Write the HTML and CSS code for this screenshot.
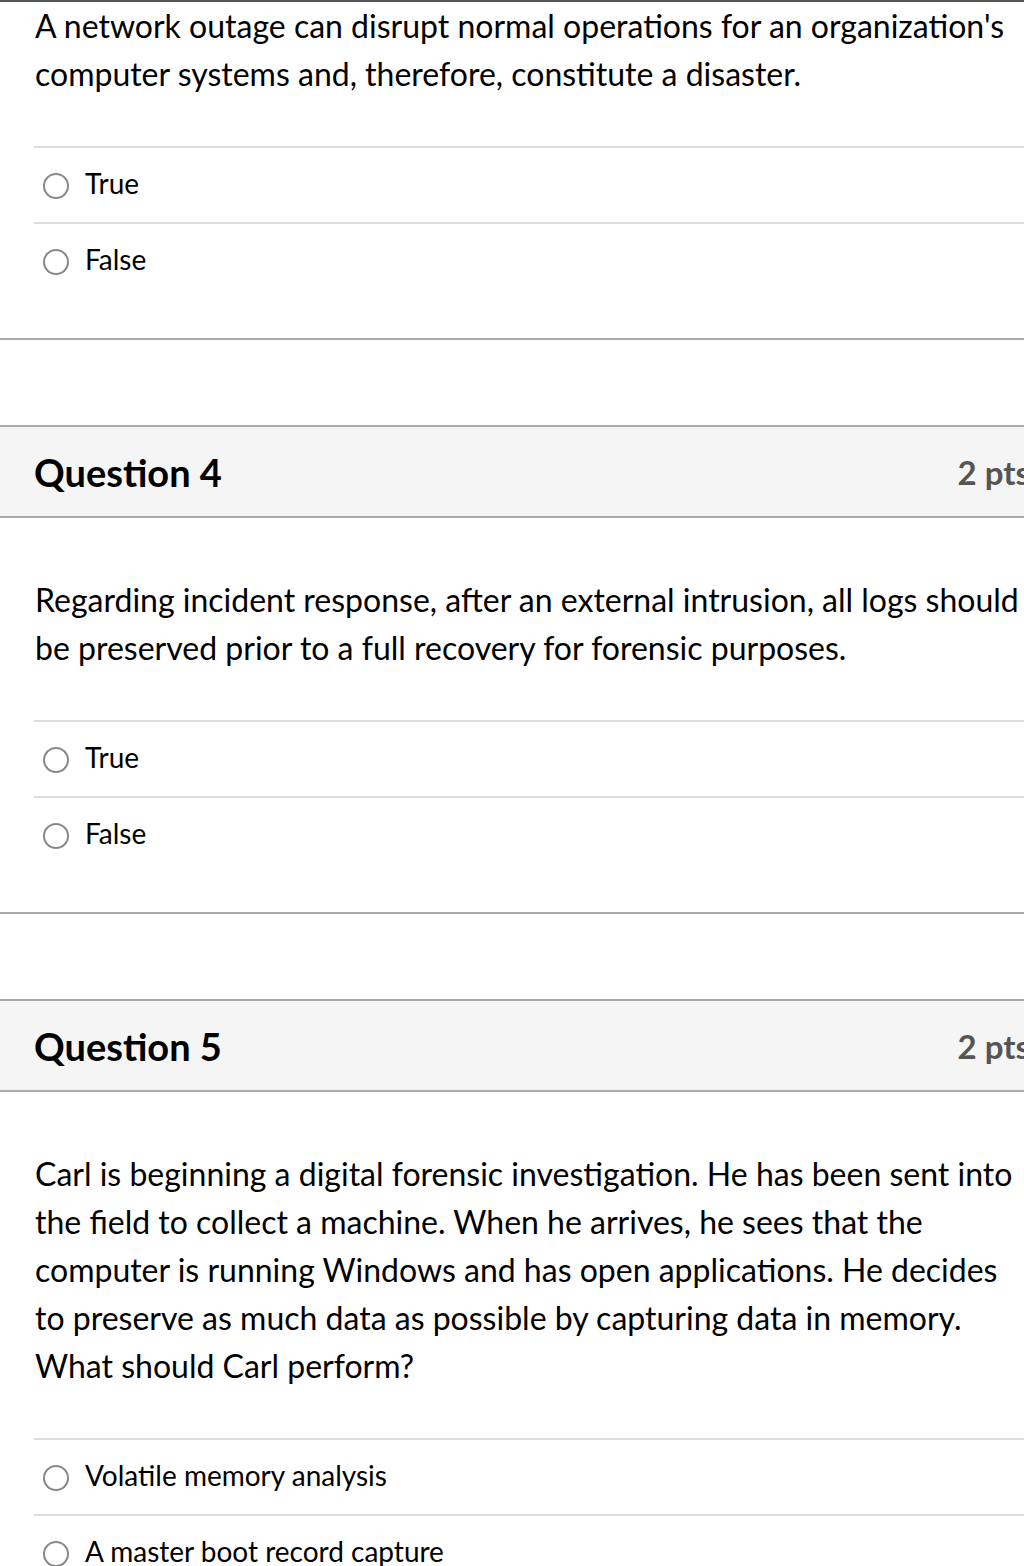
FILE: index.html
```html
<!DOCTYPE html>
<html>
<head>
<meta charset="utf-8">
<link rel="stylesheet" href="styles.css">
</head>
<body>
<div class="page">
  <div class="question first">
    <div class="qtext">A network outage can disrupt normal operations for an organization's computer systems and, therefore, constitute a disaster.</div>
    <div class="answers">
      <div class="answer"><span class="radio"></span><span class="label">True</span></div>
      <div class="answer"><span class="radio"></span><span class="label">False</span></div>
    </div>
  </div>

  <div class="question">
    <div class="qheader"><span class="qtitle">Question 4</span><span class="pts">2 pts</span></div>
    <div class="qtext">Regarding incident response, after an external intrusion, all logs should be preserved prior to a full recovery for forensic purposes.</div>
    <div class="answers">
      <div class="answer"><span class="radio"></span><span class="label">True</span></div>
      <div class="answer"><span class="radio"></span><span class="label">False</span></div>
    </div>
  </div>

  <div class="question">
    <div class="qheader"><span class="qtitle">Question 5</span><span class="pts">2 pts</span></div>
    <div class="qtext">Carl is beginning a digital forensic investigation. He has been sent into the field to collect a machine. When he arrives, he sees that the computer is running Windows and has open applications. He decides to preserve as much data as possible by capturing data in memory. What should Carl perform?</div>
    <div class="answers">
      <div class="answer"><span class="radio"></span><span class="label">Volatile memory analysis</span></div>
      <div class="answer"><span class="radio"></span><span class="label">A master boot record capture</span></div>
    </div>
  </div>
</div>
</body>
</html>
```

FILE: styles.css
```css
html, body {
  margin: 0;
  padding: 0;
  background: #fff;
  overflow: hidden;
}
body {
  font-family: Lato, "Open Sans", sans-serif;
  color: #000;
}
.page {
  width: 1062px;
  border-top: 2px solid #555;
}
.question {
  border-bottom: 2px solid #aaa;
  margin-bottom: 85px;
}
.qheader {
  display: flex;
  justify-content: space-between;
  align-items: center;
  height: 89px;
  padding: 0 32px 0 34px;
  background: #f5f5f5;
  border-top: 2px solid #aaa;
  border-bottom: 2px solid #aaa;
}
.qtitle {
  font-size: 38px;
  font-weight: 700;
  color: #000;
}
.pts {
  font-size: 33px;
  font-weight: 700;
  color: #555;
}
.qheader + .qtext {
  padding-top: 58px;
}
.qtext {
  padding: 0 34px 0 35px;
  font-size: 32px;
  line-height: 48px;
}
.answers {
  margin: 48px 0 0 34px;
  padding-bottom: 40px;
}
.answer {
  display: flex;
  align-items: center;
  box-sizing: border-box;
  height: 76px;
  padding-bottom: 5px;
  border-top: 2px solid #ddd;
}
.radio {
  width: 22px;
  height: 22px;
  border: 2px solid #888;
  border-radius: 50%;
  margin: 6px 16px 0 9px;
  flex: none;
}
.label {
  font-size: 28px;
}
```
